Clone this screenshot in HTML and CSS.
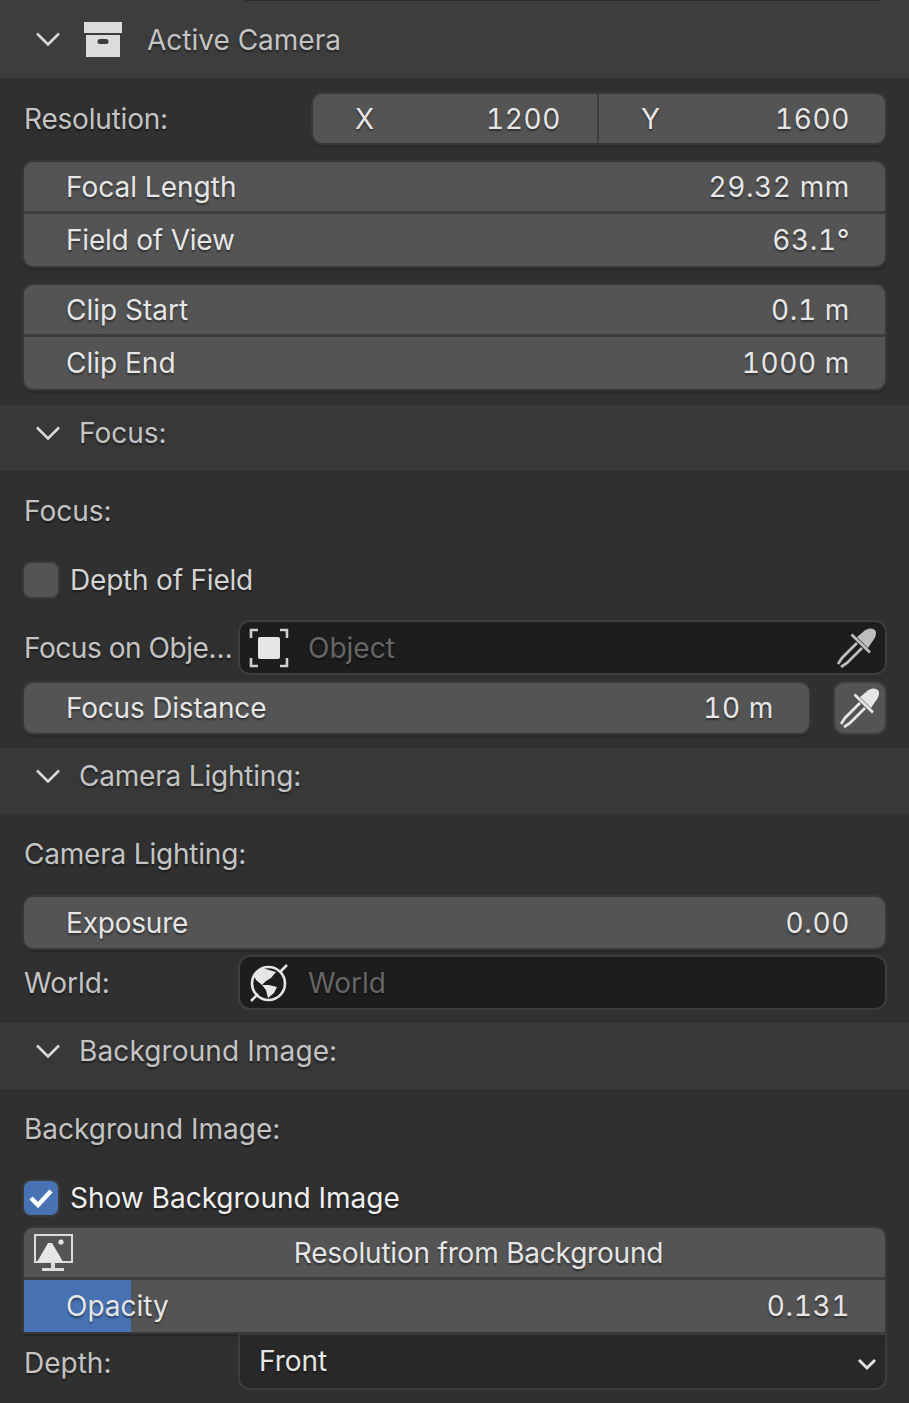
FILE: index.html
```html
<!DOCTYPE html>
<html lang="en">
<head>
    <meta charset="UTF-8">
    <meta name="viewport" content="width=device-width, initial-scale=1.0">
    <title>Active Camera</title>
    <link rel="stylesheet" href="styles.css">
</head>
<body>
    <!-- Active Camera panel -->
    <div class="panel-header">
        <svg class="chevron" viewBox="0 0 24 14"><path d="M1 1.5 L12 12.5 L23 1.5"/></svg>
        <svg class="box-icon" viewBox="0 0 38 35">
            <rect x="0" y="0" width="38" height="11" fill="#dcdcdc"/>
            <path d="M2 13 H36 V35 H2 Z M16 17 a2.5 2.5 0 0 0 0 5 h6 a2.5 2.5 0 0 0 0 -5 Z" fill="#dcdcdc" fill-rule="evenodd"/>
        </svg>
        <span class="panel-title">Active Camera</span>
    </div>
    <div class="section section-camera">
        <div class="row row-resolution">
            <span class="label label-wide tight">Resolution:</span>
            <div class="group group-h">
                <div class="num num-x"><span>X</span><span class="value">1200</span></div>
                <div class="num num-y"><span>Y</span><span class="value">1600</span></div>
            </div>
        </div>
        <div class="group group-v gap-top">
            <div class="num"><span>Focal Length</span><span class="value">29.32 mm</span></div>
            <div class="num"><span class="tight">Field of View</span><span class="value">63.1°</span></div>
        </div>
        <div class="group group-v gap-top">
            <div class="num"><span>Clip Start</span><span class="value">0.1 m</span></div>
            <div class="num"><span>Clip End</span><span class="value">1000 m</span></div>
        </div>
    </div>

    <!-- Focus -->
    <div class="sub-header">
        <svg class="chevron" viewBox="0 0 24 14"><path d="M1 1.5 L12 12.5 L23 1.5"/></svg>
        <span class="panel-title">Focus:</span>
    </div>
    <div class="section section-focus">
        <div class="label heading">Focus:</div>
        <div class="check-row">
            <span class="check"></span>
            <span class="check-label tight">Depth of Field</span>
        </div>
        <div class="row row-object">
            <span class="label label-prop tighter">Focus on Obje…</span>
            <div class="field">
                <svg class="field-icon" viewBox="0 0 40 40">
                    <path d="M9 2 H2 V10 M31 2 H38 V10 M9 38 H2 V30 M31 38 H38 V30" fill="none" stroke="#d0d0d0" stroke-width="2.6"/>
                    <rect x="9" y="9" width="22" height="22" rx="2" fill="#e6e6e6"/>
                </svg>
                <span class="placeholder">Object</span>
                <svg class="dropper dropper-dim" viewBox="0 0 40 40">
                    <use href="#dropper-shape"/>
                </svg>
            </div>
        </div>
        <div class="row row-distance">
            <div class="group group-one">
                <div class="num"><span class="tight">Focus Distance</span><span class="value">10 m</span></div>
            </div>
            <div class="icon-btn">
                <svg class="dropper" viewBox="0 0 40 40">
                    <use href="#dropper-shape"/>
                </svg>
            </div>
        </div>
    </div>

    <!-- Camera Lighting -->
    <div class="sub-header">
        <svg class="chevron" viewBox="0 0 24 14"><path d="M1 1.5 L12 12.5 L23 1.5"/></svg>
        <span class="panel-title tight">Camera Lighting:</span>
    </div>
    <div class="section section-light">
        <div class="label heading tight">Camera Lighting:</div>
        <div class="group group-one exposure">
            <div class="num"><span class="tight">Exposure</span><span class="value">0.00</span></div>
        </div>
        <div class="row row-world">
            <span class="label label-prop">World:</span>
            <div class="field">
                <svg class="field-icon" viewBox="0 0 40 40">
                    <circle cx="19.5" cy="20.5" r="16.5" fill="none" stroke="#e6e6e6" stroke-width="2.6"/>
                    <path d="M31 9 L38 2 M9 31 L2 38" stroke="#e6e6e6" stroke-width="2.6"/>
                    <path d="M5 13 L13 5 L27 9 L22 15 L17 18 L13 22 L7 17 Z M13 22 L20 22 L28 24 L25 30 L19 35 L17 27 Z" fill="#e6e6e6"/>
                </svg>
                <span class="placeholder">World</span>
            </div>
        </div>
    </div>

    <!-- Background Image -->
    <div class="sub-header">
        <svg class="chevron" viewBox="0 0 24 14"><path d="M1 1.5 L12 12.5 L23 1.5"/></svg>
        <span class="panel-title wide">Background Image:</span>
    </div>
    <div class="section section-bg">
        <div class="label heading">Background Image:</div>
        <div class="check-row">
            <span class="check check-on">
                <svg viewBox="0 0 28 24"><path d="M4 12 L11 19 L24 5" fill="none" stroke="#fff" stroke-width="4.4"/></svg>
            </span>
            <span class="check-label check-label-on">Show Background Image</span>
        </div>
        <div class="group group-v bg-group">
            <div class="num num-button">
                <svg class="monitor" viewBox="0 0 40 38">
                    <path d="M1 1 H38 V28 H1 Z" fill="none" stroke="#dcdcdc" stroke-width="2"/>
                    <path d="M3 28 L14 9 L18 9 L24 19 L29 28 Z" fill="#e6e6e6"/>
                    <circle cx="27" cy="8" r="2.6" fill="#e6e6e6"/>
                    <path d="M17 29 H21 V34 H30 V37 H8 V34 H17 Z" fill="#dcdcdc"/>
                </svg>
                <span class="tight">Resolution from Background</span>
            </div>
            <div class="num num-slider">
                <div class="slider-fill"></div>
                <span>Opacity</span><span class="value">0.131</span>
            </div>
        </div>
        <div class="row row-depth">
            <span class="label label-prop">Depth:</span>
            <div class="select">
                <span>Front</span>
                <svg class="select-arrow" viewBox="0 0 20 13"><path d="M2 2 L10 10 L18 2"/></svg>
            </div>
        </div>
    </div>

    <svg class="defs" width="0" height="0">
        <defs>
            <g id="dropper-shape">
                <path d="M20 9 L31 20 L35 14 C40 8 40 3 37 1.5 C34 -0.5 29 1 26 4 Z" fill="currentColor"/>
                <path d="M14.5 6.5 L33 24.5" stroke="currentColor" stroke-width="2.8" fill="none"/>
                <path d="M20 15 L5 30 L1 36 M25 20 L10 35 L4 39" stroke="currentColor" stroke-width="2.8" fill="none"/>
            </g>
        </defs>
    </svg>
</body>
</html>
```

FILE: styles.css
```css
html, body {
    margin: 0;
    padding: 0;
}
body {
    width: 909px;
    height: 1403px;
    overflow: hidden;
    background-color: #303030;
    font-family: Inter, "Liberation Sans", sans-serif;
    font-size: 28px;
    color: #e6e6e6;
    text-shadow: 0 2px 2px rgba(0, 0, 0, 0.45);
}
.defs {
    position: absolute;
}
.tight {
    letter-spacing: -0.2px;
}
.tighter {
    letter-spacing: -0.45px;
}
.wide {
    letter-spacing: 0.12px;
}

/* headers */
.panel-header,
.sub-header {
    display: flex;
    align-items: center;
    padding-left: 36px;
}
.panel-header {
    position: relative;
    height: 78px;
    background-color: #3d3d3d;
}
.panel-header::before {
    content: "";
    position: absolute;
    top: 0;
    left: 245px;
    right: 28px;
    height: 1px;
    background-color: #2a2a2a;
}
.sub-header {
    height: 66px;
    box-sizing: border-box;
    padding-bottom: 11px;
    background-color: #383838;
}
.panel-title {
    color: #c4c4c4;
}
.panel-header .panel-title {
    margin: 1px 0 0 25px;
}
.sub-header .panel-title {
    margin-left: 19px;
}
.chevron {
    width: 24px;
    height: 14px;
    flex: none;
}
.chevron path {
    fill: none;
    stroke: #d8d8d8;
    stroke-width: 2.6;
}
.box-icon {
    width: 38px;
    height: 35px;
    margin: 1px 0 0 24px;
    flex: none;
}

/* sections */
.section {
    padding: 0 24px;
    box-sizing: border-box;
}
.section-camera {
    padding-top: 16px;
    height: 327px;
}
.section-focus {
    height: 277px;
}
.section-light {
    height: 209px;
}
.row {
    display: flex;
    align-items: center;
}
.label {
    color: #c4c4c4;
}
.label-wide {
    width: 289px;
    flex: none;
}
.label-prop {
    width: 216px;
    flex: none;
    white-space: nowrap;
}
.heading {
    height: 80px;
    line-height: 81px;
}

/* number fields */
.group {
    border-radius: 9px;
    overflow: hidden;
    background-color: #3d3d3d;
    box-shadow: 0 0 0 2px #383838, 0 3px 2px 1px #272727;
}
.group-h {
    display: flex;
    flex: 1;
    gap: 2px;
}
.group-v {
    display: flex;
    flex-direction: column;
    gap: 3px;
}
.gap-top {
    margin-top: 19px;
}
.num {
    position: relative;
    display: flex;
    justify-content: space-between;
    align-items: center;
    height: 51px;
    padding: 0 35px 0 42px;
    background-color: #545454;
}
.group-v .num:first-child {
    height: 49px;
}
.group-v .num:last-child {
    height: 52px;
}
.value {
    font-feature-settings: "tnum";
    letter-spacing: 0.6px;
}
.num-x {
    flex: none;
    box-sizing: border-box;
    width: 284px;
    height: 49px;
    padding-right: 36px;
}
.num-y {
    flex: 1;
    height: 49px;
}
.row-distance .group {
    flex: 1;
}
.exposure {
    margin: 3px 0 9px;
}

/* checkboxes */
.check-row {
    display: flex;
    align-items: center;
    height: 34px;
    margin-top: 12px;
}
.check {
    display: flex;
    align-items: center;
    justify-content: center;
    width: 34px;
    height: 34px;
    box-sizing: border-box;
    border-radius: 7px;
    background-color: #545454;
    box-shadow: 0 0 0 2px #3a3a3a;
}
.check svg {
    width: 28px;
    height: 24px;
}
.check-on {
    background-color: #4772b3;
}
.check-label {
    margin-left: 12px;
    color: #d4d4d4;
}
.check-label-on {
    color: #f0f0f0;
}

/* text fields */
.field {
    flex: 1;
    display: flex;
    align-items: center;
    height: 51px;
    box-sizing: border-box;
    border-radius: 10px;
    background-color: #1d1d1d;
    box-shadow: 0 0 0 2px #3d3d3d;
    padding: 0 8px 0 9px;
}
.field-icon {
    width: 40px;
    height: 40px;
    flex: none;
}
.placeholder {
    margin-left: 19px;
    flex: 1;
    color: #666666;
}
.row-object {
    margin-top: 25px;
}
.row-distance {
    margin-top: 10px;
    gap: 26px;
}
.row-distance .num {
    height: 50px;
}
.dropper {
    width: 40px;
    height: 40px;
    flex: none;
    color: #e6e6e6;
}
.dropper-dim {
    color: #bdbdbd;
}
.icon-btn {
    display: flex;
    align-items: center;
    justify-content: center;
    width: 50px;
    height: 50px;
    border-radius: 9px;
    background-color: #545454;
    box-shadow: 0 0 0 2px #3d3d3d;
}

/* background image */
.bg-group {
    margin-top: 13px;
    border-radius: 9px 9px 0 0;
}
.num-button {
    justify-content: center;
    padding: 0 0 0 48px;
}
.monitor {
    position: absolute;
    left: 10px;
    top: 6px;
    width: 40px;
    height: 38px;
}
.num-slider {
    overflow: hidden;
}
.num-slider span {
    position: relative;
}
.slider-fill {
    position: absolute;
    left: 0;
    top: 0;
    bottom: 0;
    width: 107px;
    background-color: #4772b3;
}
.row-depth {
    align-items: flex-start;
    margin-top: 3px;
}
.row-depth .label {
    padding-top: 11px;
}
.select {
    flex: 1;
    display: flex;
    justify-content: space-between;
    align-items: center;
    height: 53px;
    box-sizing: border-box;
    padding: 0 8px 2px 19px;
    border-radius: 0 0 10px 10px;
    background-color: #282828;
    box-shadow: 0 0 0 2px #3d3d3d;
}
.select-arrow {
    width: 20px;
    height: 13px;
    margin-top: 7px;
}
.select-arrow path {
    fill: none;
    stroke: #e0e0e0;
    stroke-width: 3;
}
```
